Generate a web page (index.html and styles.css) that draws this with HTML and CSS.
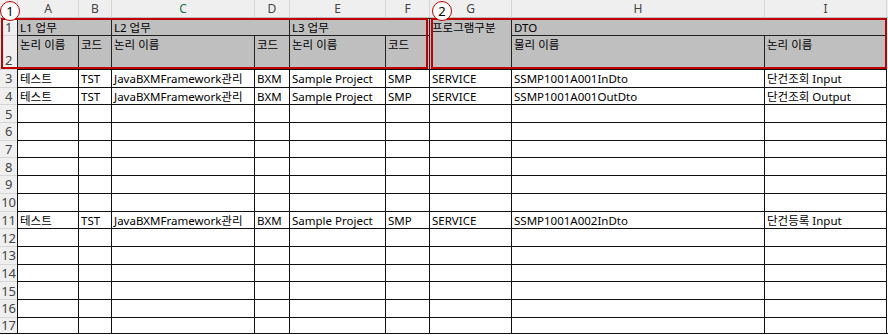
FILE: index.html
```html
<!DOCTYPE html>
<html lang="ko">
<head>
<meta charset="utf-8">
<title>DTO 목록</title>
<link rel="stylesheet" href="styles.css">
</head>
<body>
<div class="sheet">
  <div class="corner"></div>
  <div class="ch">A</div><div class="ch">B</div><div class="ch sel">C</div><div class="ch">D</div><div class="ch">E</div><div class="ch">F</div><div class="ch">G</div><div class="ch">H</div><div class="ch">I</div><div class="ch chx"></div>

  <div class="rh">1</div>
  <div class="hd span2">L1 업무</div>
  <div class="hd span2">L2 업무</div>
  <div class="hd span2">L3 업무</div>
  <div class="hd tall">프로그램구분</div>
  <div class="hd span2">DTO</div>
  <div class="x hx"></div>

  <div class="rh rh2">2</div>
  <div class="hd">논리 이름</div><div class="hd">코드</div><div class="hd">논리 이름</div><div class="hd">코드</div><div class="hd">논리 이름</div><div class="hd">코드</div><div class="hd">물리 이름</div><div class="hd">논리 이름</div>
  <div class="x hx"></div>

  <div class="rh">3</div>
  <div class="c">테스트</div><div class="c">TST</div><div class="c">JavaBXMFramework관리</div><div class="c">BXM</div><div class="c">Sample Project</div><div class="c">SMP</div><div class="c">SERVICE</div><div class="c">SSMP1001A001InDto</div><div class="c">단건조회 Input</div><div class="x"></div>

  <div class="rh">4</div>
  <div class="c">테스트</div><div class="c">TST</div><div class="c">JavaBXMFramework관리</div><div class="c">BXM</div><div class="c">Sample Project</div><div class="c">SMP</div><div class="c">SERVICE</div><div class="c">SSMP1001A001OutDto</div><div class="c">단건조회 Output</div><div class="x"></div>

  <div class="rh">5</div>
  <div class="c"></div><div class="c"></div><div class="c"></div><div class="c"></div><div class="c"></div><div class="c"></div><div class="c"></div><div class="c"></div><div class="c"></div><div class="x"></div>
  <div class="rh">6</div>
  <div class="c"></div><div class="c"></div><div class="c"></div><div class="c"></div><div class="c"></div><div class="c"></div><div class="c"></div><div class="c"></div><div class="c"></div><div class="x"></div>
  <div class="rh">7</div>
  <div class="c"></div><div class="c"></div><div class="c"></div><div class="c"></div><div class="c"></div><div class="c"></div><div class="c"></div><div class="c"></div><div class="c"></div><div class="x"></div>
  <div class="rh">8</div>
  <div class="c"></div><div class="c"></div><div class="c"></div><div class="c"></div><div class="c"></div><div class="c"></div><div class="c"></div><div class="c"></div><div class="c"></div><div class="x"></div>
  <div class="rh">9</div>
  <div class="c"></div><div class="c"></div><div class="c"></div><div class="c"></div><div class="c"></div><div class="c"></div><div class="c"></div><div class="c"></div><div class="c"></div><div class="x"></div>
  <div class="rh">10</div>
  <div class="c"></div><div class="c"></div><div class="c"></div><div class="c"></div><div class="c"></div><div class="c"></div><div class="c"></div><div class="c"></div><div class="c"></div><div class="x"></div>

  <div class="rh">11</div>
  <div class="c">테스트</div><div class="c">TST</div><div class="c">JavaBXMFramework관리</div><div class="c">BXM</div><div class="c">Sample Project</div><div class="c">SMP</div><div class="c">SERVICE</div><div class="c">SSMP1001A002InDto</div><div class="c">단건등록 Input</div><div class="x"></div>

  <div class="rh">12</div>
  <div class="c"></div><div class="c"></div><div class="c"></div><div class="c"></div><div class="c"></div><div class="c"></div><div class="c"></div><div class="c"></div><div class="c"></div><div class="x"></div>
  <div class="rh">13</div>
  <div class="c"></div><div class="c"></div><div class="c"></div><div class="c"></div><div class="c"></div><div class="c"></div><div class="c"></div><div class="c"></div><div class="c"></div><div class="x"></div>
  <div class="rh">14</div>
  <div class="c"></div><div class="c"></div><div class="c"></div><div class="c"></div><div class="c"></div><div class="c"></div><div class="c"></div><div class="c"></div><div class="c"></div><div class="x"></div>
  <div class="rh">15</div>
  <div class="c"></div><div class="c"></div><div class="c"></div><div class="c"></div><div class="c"></div><div class="c"></div><div class="c"></div><div class="c"></div><div class="c"></div><div class="x"></div>
  <div class="rh">16</div>
  <div class="c"></div><div class="c"></div><div class="c"></div><div class="c"></div><div class="c"></div><div class="c"></div><div class="c"></div><div class="c"></div><div class="c"></div><div class="x"></div>
  <div class="rh last">17</div>
  <div class="c last"></div><div class="c last"></div><div class="c last"></div><div class="c last"></div><div class="c last"></div><div class="c last"></div><div class="c last"></div><div class="c last"></div><div class="c last"></div><div class="x last"></div>

  <div class="box box1"></div>
  <div class="box box2"></div>
  <div class="mark mark1">1</div>
  <div class="mark mark2">2</div>
</div>
</body>
</html>
```

FILE: styles.css
```css
html, body {
  margin: 0;
  padding: 0;
  background: #ffffff;
}

body {
  font-family: "Noto Sans", "Noto Sans CJK KR", sans-serif;
  color: #000;
}

.sheet {
  position: relative;
  width: 888px;
  height: 335px;
  overflow: hidden;
  display: grid;
  grid-template-columns: 17px 61px 33px 143px 35px 96px 44px 82px 253px 122px 2px;
  grid-template-rows: 18px 17px 34px repeat(15, 17.7px);
}

.sheet > div {
  box-sizing: border-box;
  min-width: 0;
}

.corner {
  background: #efefef;
  border-bottom: 1px solid #bdbdbd;
}

.ch {
  background: #efefef;
  border-left: 1px solid #d6d6d6;
  border-bottom: 1px solid #bdbdbd;
  color: #444;
  font-size: 12px;
  line-height: 17px;
  text-align: center;
}

.ch.sel {
  color: #217346;
}

.rh {
  background: #efefef;
  border-top: 1px solid #d6d6d6;
  color: #444;
  font-size: 13px;
  line-height: 16px;
  letter-spacing: -0.3px;
  display: flex;
  align-items: center;
  justify-content: center;
}

.rh2 {
  align-items: flex-end;
  padding-bottom: 1px;
}

.hd {
  background: #bfbfbf;
  border-left: 1px solid #222;
  border-top: 1px solid #222;
  font-size: 11.5px;
  line-height: 16px;
  padding: 1px 0 0 2px;
  white-space: nowrap;
  overflow: hidden;
}

.span2 {
  grid-column: span 2;
}

.tall {
  grid-row: span 2;
}

.c {
  background: #fff;
  border-left: 1px solid #111;
  border-top: 1px solid #111;
  font-size: 11.5px;
  line-height: 17px;
  padding-left: 2px;
  white-space: nowrap;
  overflow: hidden;
}

.x {
  background: #fff;
  border-left: 1px solid #111;
}

.last {
  border-bottom: 1px solid #111;
}

.box {
  position: absolute;
  top: 18px;
  height: 51px;
  border: 2px solid #c00000;
  box-sizing: border-box;
}

.box1 {
  left: 1px;
  width: 427px;
}

.box2 {
  left: 431px;
  width: 456px;
}

.mark {
  position: absolute;
  width: 20px;
  height: 20px;
  box-sizing: border-box;
  border: 1.5px solid #c00000;
  border-radius: 50%;
  background: #fff;
  color: #000;
  font-size: 13px;
  line-height: 13px;
  display: flex;
  align-items: center;
  justify-content: center;
}

.mark1 {
  left: 0;
  top: 1px;
}

.mark2 {
  left: 432px;
  top: 1px;
}
```
